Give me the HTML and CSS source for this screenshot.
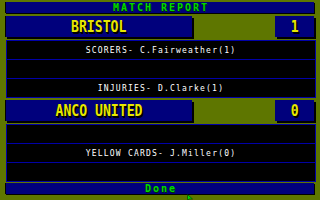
FILE: index.html
```html
<!DOCTYPE html>
<html>
<head>
<meta charset="utf-8">
<link rel="stylesheet" href="styles.css">
</head>
<body>
<div class="screen">
  <div class="bar title"><span class="label">MATCH REPORT</span></div>
  <div class="team-row first">
    <div class="box team-box"><span class="big">BRISTOL</span></div>
    <div class="box score-box"><span class="big">1</span></div>
  </div>
  <div class="panel">
    <div class="row"><span class="info">SCORERS- C.Fairweather(1)</span></div>
    <div class="row"></div>
    <div class="row"><span class="info">INJURIES- D.Clarke(1)</span></div>
  </div>
  <div class="team-row second">
    <div class="box team-box"><span class="big">ANCO UNITED</span></div>
    <div class="box score-box"><span class="big">0</span></div>
  </div>
  <div class="panel">
    <div class="row"></div>
    <div class="row"><span class="info">YELLOW CARDS- J.Miller(0)</span></div>
    <div class="row"></div>
  </div>
  <div class="bar done"><span class="label">Done</span></div>
  <svg class="cursor" width="6" height="7" viewBox="0 0 6 7"><polygon points="0.5,0.5 0.5,6.5 2,5 5.5,5" fill="#00d800" stroke="#003000" stroke-width="0.6"/></svg>
</div>
</body>
</html>
```

FILE: styles.css
```css
html, body {
  margin: 0;
  padding: 0;
  background: #5e7600;
}

.screen {
  position: relative;
  width: 320px;
  height: 200px;
  box-sizing: border-box;
  padding: 2px 4px 0 5px;
  background: #5e7600;
  display: flex;
  flex-direction: column;
  overflow: hidden;
}

.bar {
  height: 11px;
  margin-right: 2px;
  background: #00007c;
  border-left: 1px solid #000;
  box-shadow: 1px 1px 0 #000;
  display: flex;
  align-items: center;
  justify-content: center;
}

.label {
  font-family: "DejaVu Sans Mono", monospace;
  font-weight: bold;
  font-size: 10px;
  line-height: 10px;
  letter-spacing: 2px;
  color: #00d800;
  text-shadow: 1px 1px 0 #003000;
  margin-right: -2px;
}

.done {
  margin-top: 1px;
}

.team-row {
  height: 21px;
  display: flex;
  justify-content: space-between;
}

.team-row.first {
  margin-top: 3px;
  margin-bottom: 3px;
}

.team-row.second {
  margin-top: 2px;
  margin-bottom: 3px;
}

.box {
  background: #00007c;
  box-shadow: 2px 2px 0 #000;
  display: flex;
  align-items: center;
  justify-content: center;
}

.team-box {
  width: 187px;
  border-left: 1px solid #000;
  box-sizing: border-box;
}

.score-box {
  width: 39px;
  margin-right: 2px;
}

.big {
  display: inline-block;
  font-family: "DejaVu Sans Mono", monospace;
  font-weight: bold;
  font-size: 16px;
  line-height: 16px;
  color: #e8e800;
  text-shadow: 1px 1px 0 #000, 2px 2px 0 #000;
  transform: scaleX(0.82);
  white-space: nowrap;
}

.panel {
  margin-left: 1px;
  background: #000;
  border: 1px solid #0000a8;
  display: flex;
  flex-direction: column;
}

.row {
  height: 18px;
  border-bottom: 1px solid #0000a8;
  display: flex;
  align-items: center;
  justify-content: center;
}

.row:last-child {
  border-bottom: none;
}

.info {
  font-family: "DejaVu Sans Mono", monospace;
  font-size: 8px;
  line-height: 8px;
  letter-spacing: 1.2px;
  color: #ffffff;
  white-space: nowrap;
  margin-top: 1px;
}

.cursor {
  position: absolute;
  left: 187px;
  top: 194px;
}
```
